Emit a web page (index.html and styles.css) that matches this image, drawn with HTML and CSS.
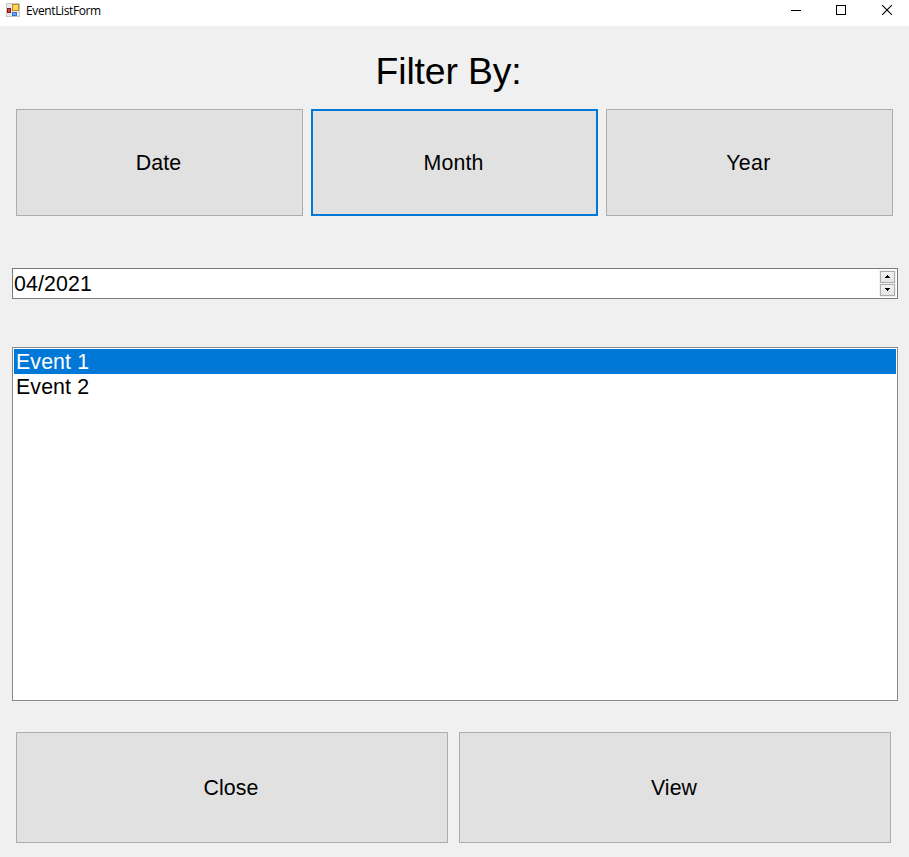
FILE: index.html
```html
<!DOCTYPE html>
<html lang="en">
<head>
<meta charset="utf-8">
<title>EventListForm</title>
<link rel="stylesheet" href="styles.css">
</head>
<body>
<div class="window">
  <header class="titlebar">
    <svg class="app-icon" width="14" height="14" viewBox="0 0 14 14" shape-rendering="crispEdges">
      <rect x="0.5" y="0.5" width="13" height="13" fill="#e9e9e9" stroke="#c6c6c6"/>
      <rect x="1" y="5" width="4" height="5" fill="#8e1616"/>
      <rect x="2" y="6" width="2" height="3" fill="#cf4a40"/>
      <rect x="6" y="1" width="7" height="7" fill="#c58a10"/>
      <rect x="7" y="2" width="5" height="5" fill="#ffd75e"/>
      <rect x="6" y="9" width="5" height="4" fill="#3a70d0"/>
      <rect x="7" y="10" width="3" height="2" fill="#6fa2f0"/>
    </svg>
    <span class="caption">EventListForm</span>
    <div class="controls">
      <svg width="10" height="10" viewBox="0 0 10 10"><path d="M0 5.5H10" stroke="#000"/></svg>
      <svg width="10" height="10" viewBox="0 0 10 10"><rect x="0.5" y="0.5" width="9" height="9" fill="none" stroke="#000"/></svg>
      <svg width="10" height="10" viewBox="0 0 10 10"><path d="M0 0L10 10M10 0L0 10" stroke="#000" stroke-width="1.1"/></svg>
    </div>
  </header>
  <main class="form">
    <h1 class="heading">Filter By:</h1>
    <div class="filters">
      <button class="btn">Date</button>
      <button class="btn btn-default">Month</button>
      <button class="btn btn-year">Year</button>
    </div>
    <div class="picker">
      <span class="value">04/2021</span>
      <div class="spinner">
        <div class="spin"><svg width="5" height="3" viewBox="0 0 5 3" shape-rendering="crispEdges"><path d="M2 0h1v1h1v1h1v1H0V2h1V1h1z"/></svg></div>
        <div class="spin"><svg width="5" height="3" viewBox="0 0 5 3" shape-rendering="crispEdges"><path d="M0 0h5v1H4v1H3v1H2V2H1V1H0z"/></svg></div>
      </div>
    </div>
    <ul class="events">
      <li class="event selected">Event 1</li>
      <li class="event">Event 2</li>
    </ul>
    <div class="actions">
      <button class="btn">Close</button>
      <button class="btn">View</button>
    </div>
  </main>
</div>
</body>
</html>
```
FILE: styles.css
```css
* { box-sizing: border-box; }
body {
  margin: 0;
  background: #f0f0f0;
  color: #000;
  font: 21.33px/25px "Liberation Sans", Arial, sans-serif;
}
.window { height: 857px; overflow: hidden; }
.titlebar {
  display: flex;
  height: 26px;
  padding: 3px 17px 0 6px;
  background: #fff;
}
.caption {
  margin-left: 6px;
  font: 12px/16px "Open Sans", "Noto Sans", sans-serif;
  letter-spacing: -0.38px;
}
.controls {
  display: flex;
  gap: 35px;
  margin-left: auto;
  padding-top: 2px;
}
.controls svg { display: block; }
.controls svg:last-child { margin-left: 1px; }
.form { padding: 20px 11px 0 12px; }
.heading {
  margin: 0;
  padding-right: 13px;
  font-size: 37.33px;
  line-height: 50px;
  font-weight: 400;
  letter-spacing: -0.15px;
  text-align: center;
}
.filters {
  display: grid;
  grid-template-columns: repeat(3, 287px);
  gap: 8px;
  height: 107px;
  margin: 13px 0 0 4px;
}
.btn {
  padding: 2px 2px 0 0;
  border: 1px solid #adadad;
  border-radius: 0;
  background: #e1e1e1;
  color: #000;
  font: inherit;
  letter-spacing: 0.1px;
}
.btn-default { border: 2px solid #0078d7; }
.btn-year { letter-spacing: 0.4px; }
.picker {
  display: flex;
  justify-content: space-between;
  height: 31px;
  margin-top: 52px;
  padding: 1px;
  border: 1px solid #7a7a7a;
  background: #fff;
}
.value { padding-top: 2px; letter-spacing: 0.12px; }
.spinner {
  display: grid;
  grid-template-rows: 13px 13px;
  width: 17px;
  padding: 0 1px;
  background: #f0f0f0;
  align-content: center;
}
.spin {
  display: flex;
  align-items: center;
  justify-content: center;
  width: 15px;
  height: 12px;
  border: 1px solid #acacac;
  background: linear-gradient(#f2f2f2, #e4e4e4);
}
.events {
  height: 354px;
  margin: 48px 0 0;
  padding: 1px;
  border: 1px solid #828790;
  background: #fff;
  list-style: none;
}
.event { height: 25px; padding-left: 2px; line-height: 26px; letter-spacing: 0.12px; }
.selected { background: #0078d7; color: #fff; }
.actions {
  display: grid;
  grid-template-columns: repeat(2, 432px);
  gap: 11px;
  height: 111px;
  margin: 31px 0 0 4px;
}
```
